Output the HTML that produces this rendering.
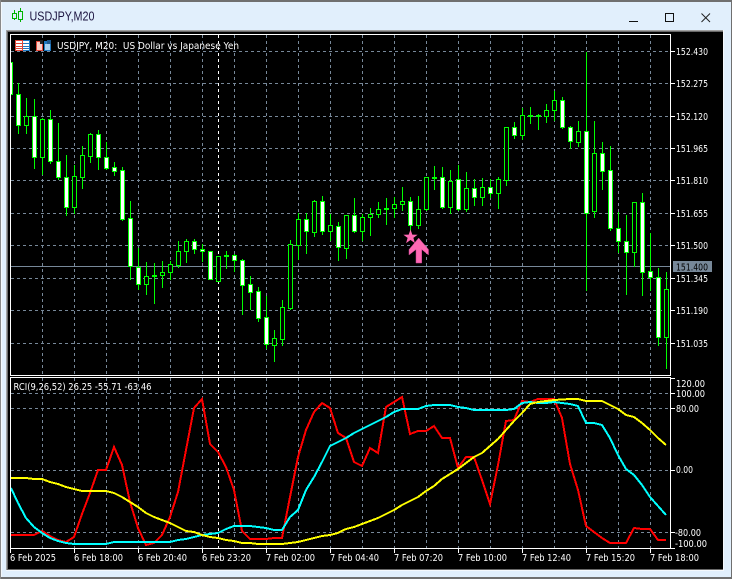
<!DOCTYPE html>
<html><head><meta charset="utf-8"><style>
html,body{margin:0;padding:0;background:#e1effc;width:732px;height:579px;overflow:hidden}
svg{display:block}
text{font-family:"DejaVu Sans",sans-serif;font-size:10px;fill:#fff}
</style></head><body>
<svg width="732" height="579" viewBox="0 0 732 579" xmlns="http://www.w3.org/2000/svg">
<defs><clipPath id="c"><rect x="11" y="35" width="659" height="513"/></clipPath></defs>
<g shape-rendering="crispEdges">
<rect width="732" height="579" fill="#e1effc"/>
<rect width="732" height="2" fill="#6f6f6f"/>
<rect y="577" width="732" height="2" fill="#6f6f6f"/>
<rect width="1" height="579" fill="#8a8a8a"/>
<rect x="731" width="1" height="579" fill="#6f6f6f"/>
<rect x="1" y="2" width="1" height="575" fill="#f4f8fc"/>
<rect x="6" y="30" width="718" height="541" fill="#f4f8fc"/>
<rect x="6" y="30" width="717" height="540" fill="#a0a0a0"/>
<rect x="7" y="31" width="716" height="539" fill="#696969"/>
<rect x="8" y="32" width="715" height="537" fill="#000"/>
</g>
<!-- title bar -->
<g shape-rendering="crispEdges" fill="#00b400">
<path d="M14 10h1v10h-1zM12 13h5v6h-5zM20 8h1v14h-1zM18 11h5v9h-5z"/>
<path fill="#e1effc" d="M13 14h3v4h-3zM19 12h3v7h-3z"/>
</g>
<text x="29.5" y="20.5" textLength="65" lengthAdjust="spacingAndGlyphs" style="font-family:'Liberation Sans',sans-serif;font-size:12.5px;fill:#1c1440">USDJPY,M20</text>
<g shape-rendering="crispEdges" fill="#111">
<rect x="629" y="21" width="9" height="1"/>
<path d="M665 13h9v9h-9zM666 14v7h7v-7z" fill-rule="evenodd"/>
</g>
<path d="M701.5 13.5l8.5 8.5M710 13.5l-8.5 8.5" stroke="#222" stroke-width="1" fill="none"/>
<!-- grid main -->
<g shape-rendering="crispEdges" fill="none" stroke="#778899" stroke-dasharray="3 3">
<path d="M11 51.5H670M11 83.5H670M11 116.5H670M11 148.5H670M11 180.5H670M11 213.5H670M11 245.5H670M11 278.5H670M11 310.5H670M11 343.5H670"/>
<path d="M42.5 35V375M74.5 35V375M106.5 35V375M138.5 35V375M170.5 35V375M202.5 35V375M234.5 35V375M266.5 35V375M298.5 35V375M330.5 35V375M362.5 35V375M394.5 35V375M426.5 35V375M458.5 35V375M490.5 35V375M522.5 35V375M554.5 35V375M586.5 35V375M618.5 35V375M650.5 35V375"/>
<path d="M11 393.5H670M11 408.5H670M11 470.5H670M11 532.5H670"/>
<path d="M42.5 378V548M74.5 378V548M106.5 378V548M138.5 378V548M170.5 378V548M202.5 378V548M234.5 378V548M266.5 378V548M298.5 378V548M330.5 378V548M362.5 378V548M394.5 378V548M426.5 378V548M458.5 378V548M490.5 378V548M522.5 378V548M554.5 378V548M586.5 378V548M618.5 378V548M650.5 378V548"/>
<path stroke="#fff" d="M218.5 35V375M218.5 378V548"/>
</g>
<rect x="11" y="266" width="659" height="1" fill="#778899" shape-rendering="crispEdges"/>
<!-- candles -->
<g shape-rendering="crispEdges" clip-path="url(#c)">
<path fill="#00ff00" d="M18 83h1V134h-1zM26 98h1V134h-1zM34 99h1V169h-1zM42 118h1V175h-1zM50 110h1V164h-1zM58 123h1V180h-1zM66 155h1V216h-1zM74 165h1V214h-1zM82 146h1V189h-1zM90 133h1V163h-1zM98 130h1V170h-1zM106 142h1V170h-1zM114 162h1V176h-1zM122 167h1V221h-1zM130 201h1V280h-1zM138 248h1V290h-1zM146 262h1V295h-1zM154 263h1V304h-1zM162 261h1V288h-1zM170 261h1V280h-1zM178 241h1V268h-1zM186 239h1V263h-1zM194 239h1V254h-1zM202 244h1V262h-1zM226 251h1V269h-1zM234 254h1V272h-1zM242 259h1V315h-1zM250 276h1V310h-1zM258 287h1V322h-1zM266 296h1V349h-1zM274 330h1V362h-1zM282 300h1V346h-1zM290 240h1V310h-1zM298 213h1V260h-1zM306 213h1V254h-1zM314 200h1V237h-1zM322 196h1V235h-1zM330 214h1V241h-1zM338 222h1V261h-1zM346 215h1V259h-1zM354 198h1V233h-1zM362 214h1V241h-1zM370 208h1V236h-1zM378 202h1V218h-1zM386 198h1V225h-1zM394 197h1V218h-1zM402 187h1V211h-1zM410 197h1V234h-1zM418 196h1V229h-1zM426 177h1V211h-1zM434 166h1V190h-1zM442 167h1V209h-1zM450 170h1V214h-1zM458 165h1V211h-1zM466 172h1V212h-1zM474 179h1V206h-1zM482 178h1V206h-1zM490 179h1V198h-1zM498 177h1V209h-1zM506 127h1V186h-1zM514 122h1V139h-1zM522 108h1V140h-1zM530 107h1V124h-1zM538 114h1V130h-1zM546 104h1V123h-1zM554 91h1V121h-1zM562 97h1V129h-1zM570 126h1V149h-1zM578 121h1V147h-1zM586 52h1V291h-1zM594 121h1V218h-1zM602 142h1V190h-1zM610 146h1V231h-1zM618 212h1V253h-1zM626 215h1V295h-1zM634 202h1V267h-1zM642 193h1V296h-1zM650 233h1V291h-1zM658 268h1V346h-1zM666 272h1V369h-1z"/>
<path fill="#00ff00" d="M8 62h5V95h-5zM16 94h5V126h-5zM24 116h5V126h-5zM32 116h5V158h-5zM40 119h5V158h-5zM48 119h5V162h-5zM56 161h5V178h-5zM64 177h5V208h-5zM72 176h5V208h-5zM80 155h5V178h-5zM88 134h5V157h-5zM96 134h5V158h-5zM104 157h5V169h-5zM112 167h5V172h-5zM120 170h5V220h-5zM128 218h5V267h-5zM136 267h5V285h-5zM144 276h5V285h-5zM152 275h5V277h-5zM160 272h5V276h-5zM168 264h5V273h-5zM176 251h5V266h-5zM184 241h5V252h-5zM192 241h5V250h-5zM200 249h5V252h-5zM208 251h5V280h-5zM216 256h5V282h-5zM224 255h5V257h-5zM232 255h5V261h-5zM240 260h5V286h-5zM248 284h5V293h-5zM256 291h5V319h-5zM264 317h5V345h-5zM272 338h5V346h-5zM280 307h5V340h-5zM288 244h5V309h-5zM296 219h5V246h-5zM304 219h5V232h-5zM312 201h5V233h-5zM320 201h5V232h-5zM328 225h5V232h-5zM336 226h5V248h-5zM344 215h5V249h-5zM352 215h5V232h-5zM360 217h5V232h-5zM368 214h5V218h-5zM376 209h5V215h-5zM384 208h5V210h-5zM392 204h5V209h-5zM400 201h5V205h-5zM408 201h5V226h-5zM416 209h5V226h-5zM424 177h5V210h-5zM432 177h5V179h-5zM440 177h5V208h-5zM448 181h5V208h-5zM456 179h5V210h-5zM464 188h5V210h-5zM472 188h5V198h-5zM480 187h5V198h-5zM488 187h5V194h-5zM496 179h5V194h-5zM504 127h5V181h-5zM512 127h5V136h-5zM520 115h5V136h-5zM528 115h5V117h-5zM536 115h5V117h-5zM544 110h5V117h-5zM552 100h5V111h-5zM560 100h5V128h-5zM568 127h5V142h-5zM576 131h5V143h-5zM584 131h5V214h-5zM592 153h5V212h-5zM600 153h5V172h-5zM608 170h5V229h-5zM616 228h5V242h-5zM624 241h5V253h-5zM632 202h5V253h-5zM640 202h5V273h-5zM648 271h5V278h-5zM656 277h5V338h-5zM664 289h5V338h-5z"/>
<path fill="#fff" d="M9 63h3V94h-3zM17 95h3V125h-3zM33 117h3V157h-3zM49 120h3V161h-3zM57 162h3V177h-3zM65 178h3V207h-3zM97 135h3V157h-3zM105 158h3V168h-3zM113 168h3V171h-3zM121 171h3V219h-3zM129 219h3V266h-3zM137 268h3V284h-3zM193 242h3V249h-3zM201 250h3V251h-3zM209 252h3V279h-3zM233 256h3V260h-3zM241 261h3V285h-3zM249 285h3V292h-3zM257 292h3V318h-3zM265 318h3V344h-3zM305 220h3V231h-3zM321 202h3V231h-3zM337 227h3V247h-3zM353 216h3V231h-3zM409 202h3V225h-3zM441 178h3V207h-3zM457 180h3V209h-3zM473 189h3V197h-3zM489 188h3V193h-3zM513 128h3V135h-3zM561 101h3V127h-3zM569 128h3V141h-3zM585 132h3V213h-3zM601 154h3V171h-3zM609 171h3V228h-3zM617 229h3V241h-3zM625 242h3V252h-3zM641 203h3V272h-3zM649 272h3V277h-3zM657 278h3V337h-3z"/>
<path fill="#000" d="M25 117h3V125h-3zM41 120h3V157h-3zM73 177h3V207h-3zM81 156h3V177h-3zM89 135h3V156h-3zM145 277h3V284h-3zM161 273h3V275h-3zM169 265h3V272h-3zM177 252h3V265h-3zM185 242h3V251h-3zM217 257h3V281h-3zM273 339h3V345h-3zM281 308h3V339h-3zM289 245h3V308h-3zM297 220h3V245h-3zM313 202h3V232h-3zM329 226h3V231h-3zM345 216h3V248h-3zM361 218h3V231h-3zM369 215h3V217h-3zM377 210h3V214h-3zM393 205h3V208h-3zM401 202h3V204h-3zM417 210h3V225h-3zM425 178h3V209h-3zM449 182h3V207h-3zM465 189h3V209h-3zM481 188h3V197h-3zM497 180h3V193h-3zM505 128h3V180h-3zM521 116h3V135h-3zM545 111h3V116h-3zM553 101h3V110h-3zM577 132h3V142h-3zM593 154h3V211h-3zM633 203h3V252h-3zM665 290h3V337h-3z"/>
</g>
<!-- signals -->
<path d="M418.7 238L428.5 249.5V255L421.7 249.5V263H416V249.5L409 255V249.5Z" fill="#ff69b4" stroke="#c2408f" stroke-width=".5"/>
<path d="M410.5 229.5L412.3 234.6L417.6 234.7L413.4 237.9L414.9 243.1L410.5 240L406.1 243.1L407.6 237.9L403.4 234.7L408.7 234.6Z" fill="#ff69b4"/>
<!-- indicator lines -->
<g fill="none" stroke-width="2" shape-rendering="crispEdges" clip-path="url(#c)">
<polyline stroke="#ff0000" points="11,535 34,535 42,531 50,536 58,540 66,542 74,537 82,514 90,493 98,470 106,470 114,447 122,465 130,502 138,528 146,545 154,543 162,535 170,517 178,492 186,450 194,408 202,399 210,444 218,452 226,467 234,490 242,531 250,539 258,539 266,539 274,538 282,538 290,497 298,457 306,430 314,412 322,403 330,408 338,433 346,438 354,462 362,466 370,448 378,453 386,407 394,402 402,397 410,434 418,431 426,431 434,426 442,438 450,438 458,468 466,457 474,457 482,480 490,504 498,465 506,421 514,420 522,401 530,402 538,399 546,399 554,399 562,418 570,464 578,490 586,526 594,532 602,538 610,543 618,543 626,543 634,528 642,529 650,529 658,540 666,540"/>
<polyline stroke="#00ffff" points="11,488 18,503 26,518 34,527 42,533 50,538 58,541 66,543 74,544 106,544 114,542 170,542 178,540 186,539 194,537 202,535 210,534 218,533 226,529 234,526 250,526 258,527 266,528 274,530 282,530 290,517 298,510 306,490 314,477 322,462 330,446 338,442 346,438 354,433 362,429 370,425 378,421 386,417 394,412 402,409 418,409 426,406 434,405 450,405 458,407 466,408 474,410 506,410 514,409 522,403 530,402 538,403 546,403 554,402 562,403 570,404 578,406 586,423 594,423 602,425 610,438 618,455 626,469 634,475 642,485 650,497 658,506 666,515"/>
<polyline stroke="#ffff00" points="11,478 26,478 34,479 42,479 50,482 58,484 66,487 74,489 82,491 106,491 114,493 122,497 130,502 138,507 146,513 154,517 162,520 170,523 178,527 186,531 194,532 202,535 210,537 218,538 226,540 234,541 242,543 250,543 258,544 282,544 290,543 298,542 306,540 314,538 322,536 330,535 338,533 346,529 354,527 362,524 370,521 378,518 386,514 394,510 402,505 410,501 418,497 426,491 434,486 442,479 450,474 458,469 466,463 474,457 482,453 490,446 498,439 506,430 514,421 522,413 530,404 538,402 546,401 554,400 570,399 578,399 586,401 602,401 610,405 618,409 626,415 634,417 642,423 650,430 658,438 666,445"/>
</g>
<!-- frames -->
<g shape-rendering="crispEdges" fill="#fff">
<path d="M10 34H671V376H10zM11 35V375H670V35z" fill-rule="evenodd"/>
<path d="M10 377H671V549H10zM11 378V548H670V378z" fill-rule="evenodd"/>
<path d="M671 51h4v1h-4zM671 83h4v1h-4zM671 116h4v1h-4zM671 148h4v1h-4zM671 180h4v1h-4zM671 213h4v1h-4zM671 245h4v1h-4zM671 278h4v1h-4zM671 310h4v1h-4zM671 343h4v1h-4z"/>
<path d="M671 378h4v1h-4zM671 393h4v1h-4zM671 408h4v1h-4zM671 470h4v1h-4zM671 532h4v1h-4zM671 548h4v1h-4z"/>
<path d="M10 549h1v4h-1zM74 549h1v4h-1zM138 549h1v4h-1zM202 549h1v4h-1zM266 549h1v4h-1zM330 549h1v4h-1zM394 549h1v4h-1zM458 549h1v4h-1zM522 549h1v4h-1zM586 549h1v4h-1zM650 549h1v4h-1z"/>
</g>
<rect x="673" y="261" width="39" height="11" fill="#778899" shape-rendering="crispEdges"/>
<!-- chart header icons -->
<g shape-rendering="crispEdges">
<rect x="15" y="40" width="8" height="11" fill="#e0483a"/>
<rect x="23" y="40" width="7" height="11" fill="#1f78c0"/>
<path fill="#fff" d="M16 41h6v2h-6zM16 44h6v2h-6zM16 47h6v3h-6zM23 41h6v2h-6zM23 44h6v2h-6zM23 47h6v3h-6z"/>
<path fill="#e0483a" d="M16 48h6v1h-6z"/>
<path fill="#1f78c0" d="M23 48h6v1h-6z"/>
<rect x="36" y="41" width="7" height="10" fill="#e0483a"/>
<rect x="37" y="42" width="5" height="8" fill="#fcd0c8"/>
<rect x="40" y="40" width="3" height="4" fill="#222"/>
<rect x="44" y="41" width="7" height="10" fill="#1f78c0"/>
<rect x="45" y="44" width="5" height="6" fill="#a8d2f0"/>
<rect x="47" y="40" width="4" height="4" fill="#1f5a90"/>
</g>
<!-- text -->
<text x="57" y="49" textLength="182" lengthAdjust="spacingAndGlyphs" xml:space="preserve">USDJPY, M20:  US Dollar vs Japanese Yen</text>
<text x="13.5" y="390" textLength="138" lengthAdjust="spacingAndGlyphs">RCI(9,26,52) 26.25 -55.71 -63.46</text>
<g>
<text x="676" y="55" textLength="32" lengthAdjust="spacingAndGlyphs">152.430</text>
<text x="676" y="87" textLength="32" lengthAdjust="spacingAndGlyphs">152.275</text>
<text x="676" y="120" textLength="32" lengthAdjust="spacingAndGlyphs">152.120</text>
<text x="676" y="152" textLength="32" lengthAdjust="spacingAndGlyphs">151.965</text>
<text x="676" y="184" textLength="32" lengthAdjust="spacingAndGlyphs">151.810</text>
<text x="676" y="217" textLength="32" lengthAdjust="spacingAndGlyphs">151.655</text>
<text x="676" y="249" textLength="32" lengthAdjust="spacingAndGlyphs">151.500</text>
<text x="676" y="270.500" textLength="32" lengthAdjust="spacingAndGlyphs" style="fill:#000">151.400</text>
<text x="676" y="282" textLength="32" lengthAdjust="spacingAndGlyphs">151.345</text>
<text x="676" y="314" textLength="32" lengthAdjust="spacingAndGlyphs">151.190</text>
<text x="676" y="347" textLength="32" lengthAdjust="spacingAndGlyphs">151.035</text>
<text x="676" y="387" textLength="29" lengthAdjust="spacingAndGlyphs">120.00</text>
<text x="676" y="397" textLength="29" lengthAdjust="spacingAndGlyphs">100.00</text>
<text x="676" y="412" textLength="23" lengthAdjust="spacingAndGlyphs">80.00</text>
<text x="676" y="473" textLength="17" lengthAdjust="spacingAndGlyphs">0.00</text>
<text x="675" y="536" textLength="26" lengthAdjust="spacingAndGlyphs">-80.00</text>
<text x="675" y="547" textLength="32" lengthAdjust="spacingAndGlyphs">-100.00</text>
<text x="10" y="561" textLength="46" lengthAdjust="spacingAndGlyphs">6 Feb 2025</text>
<text x="74" y="561" textLength="49" lengthAdjust="spacingAndGlyphs">6 Feb 18:00</text>
<text x="138" y="561" textLength="49" lengthAdjust="spacingAndGlyphs">6 Feb 20:40</text>
<text x="202" y="561" textLength="49" lengthAdjust="spacingAndGlyphs">6 Feb 23:20</text>
<text x="266" y="561" textLength="49" lengthAdjust="spacingAndGlyphs">7 Feb 02:00</text>
<text x="330" y="561" textLength="49" lengthAdjust="spacingAndGlyphs">7 Feb 04:40</text>
<text x="394" y="561" textLength="49" lengthAdjust="spacingAndGlyphs">7 Feb 07:20</text>
<text x="458" y="561" textLength="49" lengthAdjust="spacingAndGlyphs">7 Feb 10:00</text>
<text x="522" y="561" textLength="49" lengthAdjust="spacingAndGlyphs">7 Feb 12:40</text>
<text x="586" y="561" textLength="49" lengthAdjust="spacingAndGlyphs">7 Feb 15:20</text>
<text x="650" y="561" textLength="49" lengthAdjust="spacingAndGlyphs">7 Feb 18:00</text>
</g>
</svg>
</body></html>
